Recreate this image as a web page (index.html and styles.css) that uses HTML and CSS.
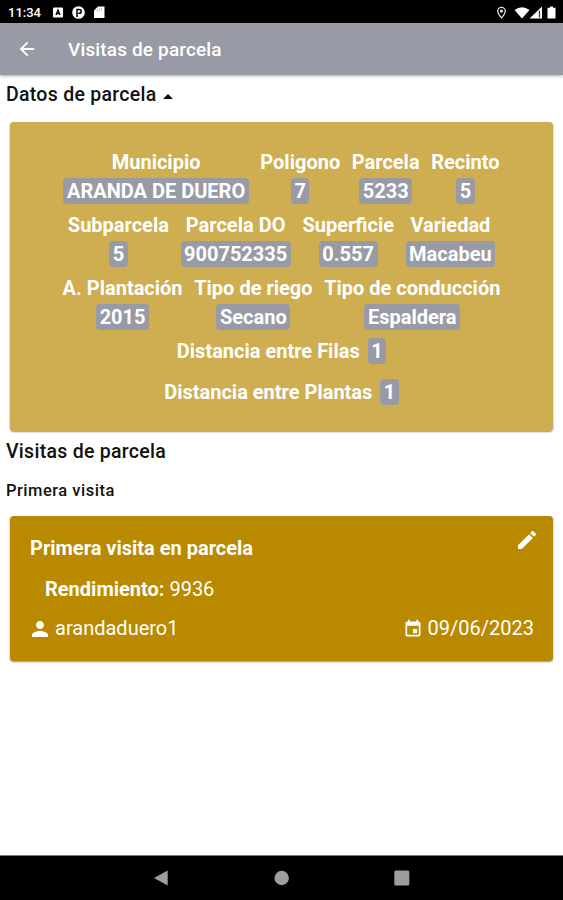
FILE: index.html
```html
<!DOCTYPE html>
<html lang="es">
<head>
    <meta charset="UTF-8">
    <meta name="viewport" content="width=device-width, initial-scale=1.0">
    <title>Visitas de parcela</title>
    <link rel="stylesheet" href="styles.css">
</head>
<body>

    <div class="status-bar">
        <span class="clock">11:34</span>
        <svg class="notifications" width="54" height="14" viewBox="0 0 54 14">
            <rect x="1" y="1.500" width="10" height="10" rx="1" fill="#fff"/>
            <path d="M4 9L6 4L8 9M4.500 7.500h3" fill="none" stroke="#000" stroke-width="1.300"/>
            <circle cx="26.500" cy="6.500" r="6.300" fill="#fff"/>
            <path d="M25 11V3.500h2.300a1.900 1.900 0 0 1 0 3.800h-1" fill="none" stroke="#000" stroke-width="1.500"/>
            <path d="M46 .5h6.500V12H42V4.500z" fill="#fff"/>
            <path d="M45.500 3.500v2M47.500 2.500v2M49.500 2.500v2" stroke="#999" stroke-width=".8"/>
        </svg>
        <svg class="signals" width="64" height="14" viewBox="0 0 64 14">
            <path d="M7.500 1.300a3.800 3.800 0 0 0-3.800 3.800c0 2.800 3.800 6.800 3.800 6.800s3.800-4 3.800-6.800a3.800 3.800 0 0 0-3.800-3.800z" fill="none" stroke="#ddd" stroke-width="1.300"/>
            <circle cx="7.500" cy="5.100" r="1.600" fill="#ddd"/>
            <path d="M20.500 4Q28-1.500 35.500 4L28 12.500z" fill="#fff"/>
            <path d="M35.500 12.500L48 .5v12z" fill="#fff"/>
            <path d="M45.500 4.500v7" stroke="#333" stroke-width="1.200"/>
            <path d="M56 .5h3v1.300h2.500v10.700h-8V1.800H56z" fill="#fff"/>
        </svg>
    </div>

    <header class="app-bar">
        <svg class="back" width="22" height="22" viewBox="0 0 24 24">
            <path d="M20 11H7.830l5.590-5.590L12 4l-8 8 8 8 1.410-1.410L7.830 13H20v-2z" fill="#fff"/>
        </svg>
        <h1>Visitas de parcela</h1>
    </header>

    <main>
        <h2 class="toggle">Datos de parcela <span class="arrow"></span></h2>

        <section class="card datos">
            <div class="row">
                <div class="field"><span>Municipio</span><b>ARANDA DE DUERO</b></div>
                <div class="field"><span>Poligono</span><b>7</b></div>
                <div class="field"><span>Parcela</span><b>5233</b></div>
                <div class="field"><span>Recinto</span><b>5</b></div>
            </div>
            <div class="row">
                <div class="field"><span>Subparcela</span><b>5</b></div>
                <div class="field"><span>Parcela DO</span><b>900752335</b></div>
                <div class="field"><span>Superficie</span><b>0.557</b></div>
                <div class="field"><span>Variedad</span><b>Macabeu</b></div>
            </div>
            <div class="row">
                <div class="field"><span>A. Plantación</span><b>2015</b></div>
                <div class="field"><span>Tipo de riego</span><b>Secano</b></div>
                <div class="field"><span>Tipo de conducción</span><b>Espaldera</b></div>
            </div>
            <div class="distance"><span>Distancia entre Filas</span><b>1</b></div>
            <div class="distance"><span>Distancia entre Plantas</span><b>1</b></div>
        </section>

        <h2 class="visits-title">Visitas de parcela</h2>
        <h3>Primera visita</h3>

        <section class="card visita">
            <div class="visita-head">
                <h4>Primera visita en parcela</h4>
                <svg class="edit" width="24" height="24" viewBox="0 0 24 24">
                    <path d="M3 17.250V21h3.750L17.810 9.940l-3.750-3.750L3 17.250zM20.710 7.040a1 1 0 0 0 0-1.410l-2.340-2.340a1 1 0 0 0-1.410 0l-1.830 1.830 3.750 3.750 1.830-1.830z" fill="#fff"/>
                </svg>
            </div>
            <p class="rendimiento"><b>Rendimiento:</b> 9936</p>
            <div class="visita-foot">
                <span class="meta">
                    <svg width="24" height="24" viewBox="0 0 24 24">
                        <path d="M12 12c2.210 0 4-1.790 4-4s-1.790-4-4-4-4 1.790-4 4 1.790 4 4 4zm0 2c-2.670 0-8 1.340-8 4v2h16v-2c0-2.660-5.330-4-8-4z" fill="#fff"/>
                    </svg>
                    <span class="user">arandaduero1</span>
                </span>
                <span class="meta">
                    <svg width="20" height="20" viewBox="0 0 24 24">
                        <path d="M17 12h-5v5h5v-5zM16 1v2H8V1H6v2H5c-1.110 0-1.990.9-1.990 2L3 19a2 2 0 0 0 2 2h14c1.100 0 2-.9 2-2V5c0-1.100-.9-2-2-2h-1V1h-2zm3 18H5V8h14v11z" fill="#fff"/>
                    </svg>
                    <span class="date">09/06/2023</span>
                </span>
            </div>
        </section>
    </main>

    <nav class="nav-bar">
        <svg width="16" height="16" viewBox="0 0 16 16"><path d="M0 8L13.700 .5v15z" fill="#9e9e9e"/></svg>
        <svg width="16" height="16" viewBox="0 0 16 16"><circle cx="7.700" cy="8" r="7.200" fill="#9e9e9e"/></svg>
        <svg width="16" height="16" viewBox="0 0 16 16"><rect x=".3" y=".5" width="15" height="15" rx="1.500" fill="#9e9e9e"/></svg>
    </nav>

</body>
</html>
```
FILE: styles.css
```css
* {
    box-sizing: border-box;
}

body {
    font-family: Roboto, sans-serif;
    background-color: white;
    margin: 0;
    height: 900px;
    display: flex;
    flex-direction: column;
    overflow: hidden;
}

h1, h2, h3, h4, p {
    margin: 0;
    white-space: nowrap;
}

b {
    font-weight: 700;
}

svg {
    display: block;
    flex: none;
}

.status-bar {
    background-color: black;
    color: white;
    height: 23px;
    display: flex;
    align-items: center;
    padding: 2px 5px 0 8px;
}

.clock {
    width: 34px;
    font-size: 13px;
    font-weight: 500;
}

.notifications {
    margin-left: 10px;
}

.signals {
    margin-left: auto;
}

.app-bar {
    background-color: #989ba5;
    color: white;
    height: 52px;
    display: flex;
    align-items: center;
    padding-left: 16px;
    box-shadow: 0 1px 3px rgba(0, 0, 0, 0.35);
}

h1 {
    margin-left: 30px;
    font-size: 19px;
    font-weight: 500;
    letter-spacing: 0.15px;
}

main {
    flex: 1;
}

h2 {
    color: #111;
    padding-left: 6px;
    font-size: 19.5px;
    font-weight: 500;
    line-height: 24px;
    letter-spacing: 0.28px;
}

.toggle {
    display: flex;
    align-items: center;
    gap: 6px;
    margin-top: 8px;
}

.arrow {
    border: 5px solid transparent;
    border-top: none;
    border-bottom-color: #111;
    margin-top: 2px;
}

.card {
    margin: 0 10px;
    border-radius: 4px;
    color: white;
    box-shadow: 0 1px 2px rgba(0, 0, 0, 0.45);
}

.datos {
    background-color: #ceae50;
    height: 309px;
    margin-top: 15px;
    padding-top: 27px;
    font-size: 20px;
    font-weight: 700;
}

.row {
    display: flex;
    justify-content: center;
    gap: 11.6px;
    height: 63px;
}

.field {
    display: flex;
    flex-direction: column;
    align-items: center;
    gap: 3px;
    line-height: 26px;
}

.datos b {
    background-color: #989ba5;
    border-radius: 4px;
    padding: 0 3.5px;
    line-height: 26px;
}

.distance {
    display: flex;
    justify-content: center;
    gap: 8px;
    line-height: 26px;
    margin-bottom: 15px;
}

.visits-title {
    margin-top: 9px;
}

h3 {
    color: #111;
    padding-left: 6px;
    margin-top: 17px;
    font-size: 16.5px;
    font-weight: 500;
    line-height: 20px;
    letter-spacing: 0.5px;
}

.visita {
    background-color: #b98900;
    height: 145px;
    margin-top: 15px;
    padding: 12px 19px 0 20px;
    font-size: 20px;
}

.visita-head {
    display: flex;
    justify-content: space-between;
    height: 41px;
}

h4 {
    font-size: 20px;
    line-height: 40px;
}

.edit {
    margin-right: -5px;
}

.rendimiento {
    padding-left: 15px;
    line-height: 40px;
}

.visita-foot {
    display: flex;
    justify-content: space-between;
    line-height: 39px;
}

.meta {
    display: flex;
    align-items: center;
}

.meta svg {
    margin-left: -2px;
}

.user {
    margin-left: 3px;
}

.date {
    margin-left: 5px;
}

.nav-bar {
    background-color: black;
    border-top: 1px solid #777;
    height: 45px;
    display: flex;
    justify-content: center;
    align-items: center;
    gap: 104px;
}
```
